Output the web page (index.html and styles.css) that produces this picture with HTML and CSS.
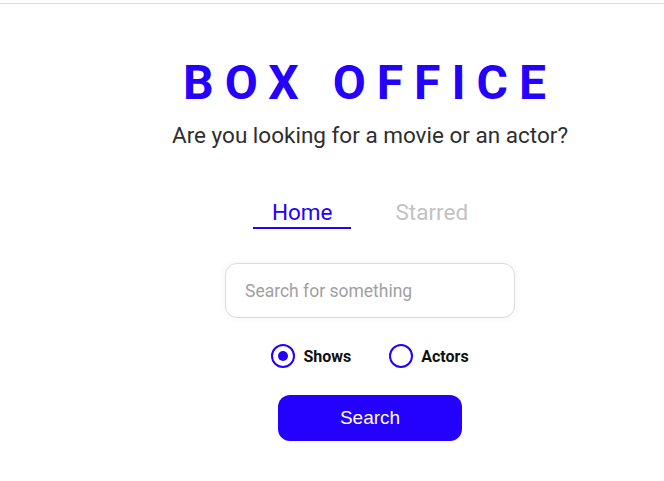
FILE: index.html
```html
<!DOCTYPE html>
<html>
<head>
<meta charset="utf-8">
<link rel="stylesheet" href="styles.css">
</head>
<body>
<div class="topline"></div>
<main class="page">
  <header class="header">
    <h1 class="title">Box Office</h1>
    <p class="subtitle">Are you looking for a movie or an actor?</p>
  </header>
  <nav class="tabs">
    <a class="tab active">Home</a>
    <a class="tab">Starred</a>
  </nav>
  <div class="search">
    <input class="search-input" type="text" placeholder="Search for something">
  </div>
  <div class="radios">
    <label class="radio"><span class="dot checked"></span><span>Shows</span></label>
    <label class="radio"><span class="dot"></span><span>Actors</span></label>
  </div>
  <div class="btn-wrap">
    <button class="search-btn" type="button">Search</button>
  </div>
</main>
</body>
</html>
```
FILE: styles.css
```css
* { box-sizing: border-box; }
html, body { margin: 0; padding: 0; background: #fff; }
body { font-family: Roboto, "Noto Sans", sans-serif; overflow: hidden; }
.topline { height: 4px; border-bottom: 1px solid #dcdcdc; }
.page {
  margin-left: 76px;
  width: 588px;
  display: flex;
  flex-direction: column;
  align-items: center;
}
.header { text-align: center; margin-top: 52px; }
.title {
  margin: 0;
  font-size: 48px;
  font-weight: 700;
  letter-spacing: 11px;
  text-transform: uppercase;
  color: #2400ff;
  line-height: 54px;
}
.subtitle {
  margin: 11px 0 0;
  font-size: 22.5px;
  color: #2e2e2e;
  line-height: 28px;
}
.tabs {
  display: flex;
  gap: 25px;
  margin-top: 49px;
}
.tab {
  font-size: 22.5px;
  line-height: 28px;
  color: #c2c2c2;
  padding: 0 19px 1px;
  border-bottom: 2px solid transparent;
}
.tab.active { color: #2400ff; border-bottom-color: #2400ff; }
.search { margin-top: 34px; }
.search-input {
  width: 290px;
  height: 55px;
  border: 1px solid #dcdcdc;
  border-radius: 12px;
  padding: 0 19px;
  font-family: Roboto, sans-serif;
  font-size: 17.5px;
  color: #333;
  box-shadow: 0 0 8px rgba(0,0,0,0.05);
  outline: none;
}
.search-input::placeholder { color: #a0a0a0; }
.radios {
  display: flex;
  gap: 38px;
  margin-top: 26px;
}
.radio {
  display: flex;
  align-items: center;
  gap: 8px;
  font-size: 16px;
  font-weight: 700;
  color: #111;
}
.dot {
  width: 24px;
  height: 24px;
  border: 2px solid #2400ff;
  border-radius: 50%;
  display: flex;
  align-items: center;
  justify-content: center;
}
.dot.checked::after {
  content: "";
  width: 10px;
  height: 10px;
  border-radius: 50%;
  background: #2400ff;
}
.btn-wrap { margin-top: 27px; }
.search-btn {
  width: 184px;
  height: 46px;
  border: none;
  border-radius: 12px;
  background: #2400ff;
  color: #fff;
  font-family: "Liberation Sans", Arial, sans-serif;
  font-size: 19px;
}
```
